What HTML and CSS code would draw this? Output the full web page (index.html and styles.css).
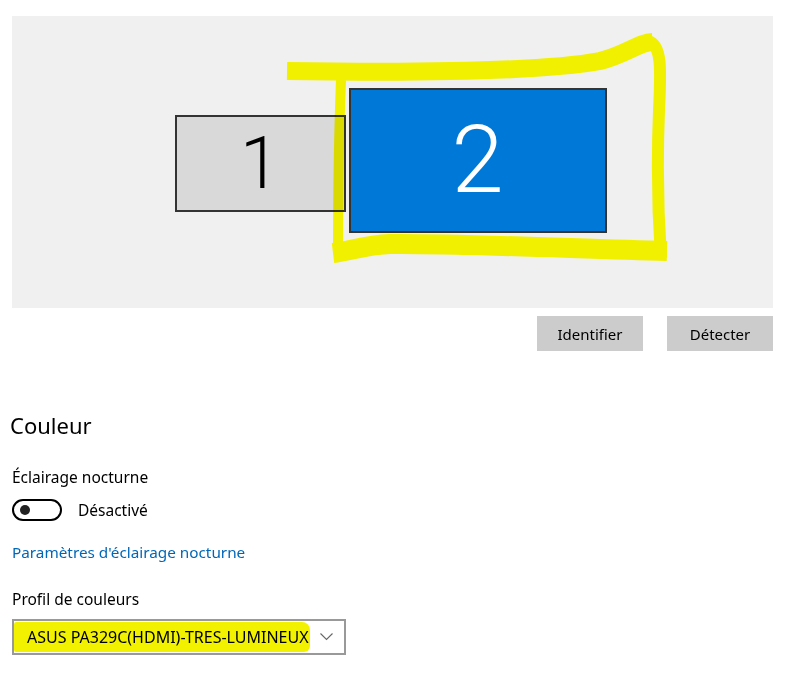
FILE: index.html
```html
<!DOCTYPE html>
<html>
<head>
  <title>Affichage - Couleur</title>
  <meta charset="UTF-8">
  <link rel="stylesheet" href="styles.css">
</head>
<body>
  <div class="display-panel">
    <div class="monitor monitor-one">1</div>
    <div class="monitor monitor-two">2</div>
    <!-- highlighter marks drawn over the panel -->
    <svg class="marker" viewBox="12 16 761 292" width="761" height="292">
      <g fill="none" stroke="#ffff00" stroke-linecap="butt" stroke-linejoin="round">
        <path d="M287 71 C420 73 540 72 600 61 C625 55 640 42 652 42" stroke-width="18"/>
        <path d="M648 41 C662 44 661 70 659 110 C657 160 658 215 661 258" stroke-width="12"/>
        <path d="M667 251 C560 248 440 243 390 244 C365 245 350 251 333 253" stroke-width="20"/>
        <path d="M341 80 C339 130 338 200 338 252" stroke-width="10"/>
      </g>
    </svg>
  </div>

  <div class="panel-actions">
    <button class="gray-button">Identifier</button>
    <button class="gray-button">Détecter</button>
  </div>

  <h2 class="section-title">Couleur</h2>

  <div class="setting">
    <div class="setting-label">Éclairage nocturne</div>
    <div class="toggle-row">
      <span class="toggle"><span class="toggle-knob"></span></span>
      <span>Désactivé</span>
    </div>
  </div>

  <a class="settings-link" href="#">Paramètres d'éclairage nocturne</a>

  <div class="setting setting-profile">
    <div class="setting-label">Profil de couleurs</div>
    <div class="dropdown">
      <span class="dropdown-value">ASUS PA329C(HDMI)-TRES-LUMINEUX</span>
      <svg class="chevron" width="13" height="8" viewBox="0 0 13 8">
        <polyline points="0.5,0.5 6.5,6.5 12.5,0.5" fill="none" stroke="#666" stroke-width="1.1"/>
      </svg>
    </div>
  </div>
</body>
</html>
```

FILE: styles.css
```css
body {
  font-family: "Segoe UI", "Noto Sans", Arial, sans-serif;
  margin: 0;
  padding: 16px 27px 0 12px;
  background-color: #fff;
  color: #000;
}
.display-panel {
  position: relative;
  box-sizing: border-box;
  height: 292px;
  padding: 0 4px 4px 0;
  background-color: #f0f0f0;
  display: flex;
  justify-content: center;
  align-items: center;
  gap: 3px;
}
.monitor {
  box-sizing: border-box;
  border: 2px solid #333;
  display: flex;
  justify-content: center;
  align-items: center;
  font-family: Roboto, "Noto Sans", sans-serif;
  font-weight: 300;
}
.monitor-one {
  width: 171px;
  height: 97px;
  margin-top: 6px;
  background-color: #d9d9d9;
  font-size: 72px;
}
.monitor-two {
  width: 258px;
  height: 145px;
  background-color: #0078d7;
  color: #fff;
  font-size: 94px;
}
.marker {
  position: absolute;
  left: 0;
  top: 0;
  mix-blend-mode: multiply;
  pointer-events: none;
}
.panel-actions {
  display: flex;
  justify-content: flex-end;
  gap: 24px;
  margin-top: 8px;
}
.gray-button {
  width: 106px;
  height: 35px;
  background-color: #ccc;
  border: none;
  font-family: inherit;
  font-size: 15px;
  color: #000;
  padding: 0;
}
.section-title {
  font-size: 22px;
  font-weight: 400;
  margin: 59px 0 0 -2px;
  line-height: 30px;
}
.setting {
  margin-top: 27px;
}
.setting-label {
  font-size: 15.5px;
  line-height: 20px;
}
.toggle-row {
  display: flex;
  align-items: center;
  gap: 16px;
  margin-top: 12px;
  font-size: 15.5px;
}
.toggle {
  box-sizing: border-box;
  width: 50px;
  height: 22px;
  border: 2px solid #000;
  border-radius: 11px;
  display: flex;
  align-items: center;
  padding-left: 6px;
}
.toggle-knob {
  width: 10px;
  height: 10px;
  border-radius: 50%;
  background-color: #222;
}
.settings-link {
  display: block;
  margin-top: 21px;
  font-size: 15.3px;
  line-height: 20px;
  color: #0067b8;
  text-decoration: none;
}
.setting-profile {
  margin-top: 27px;
}
.dropdown {
  box-sizing: border-box;
  width: 334px;
  height: 36px;
  margin-top: 10px;
  border: 2px solid #999;
  display: flex;
  align-items: center;
  justify-content: space-between;
  padding: 0 11px 0 0;
}
.dropdown-value {
  font-size: 16px;
  background-color: #f2f200;
  padding: 4px 1px 4px 13px;
  border-radius: 2px 8px 6px 2px;
}
.chevron {
  display: block;
}
```
